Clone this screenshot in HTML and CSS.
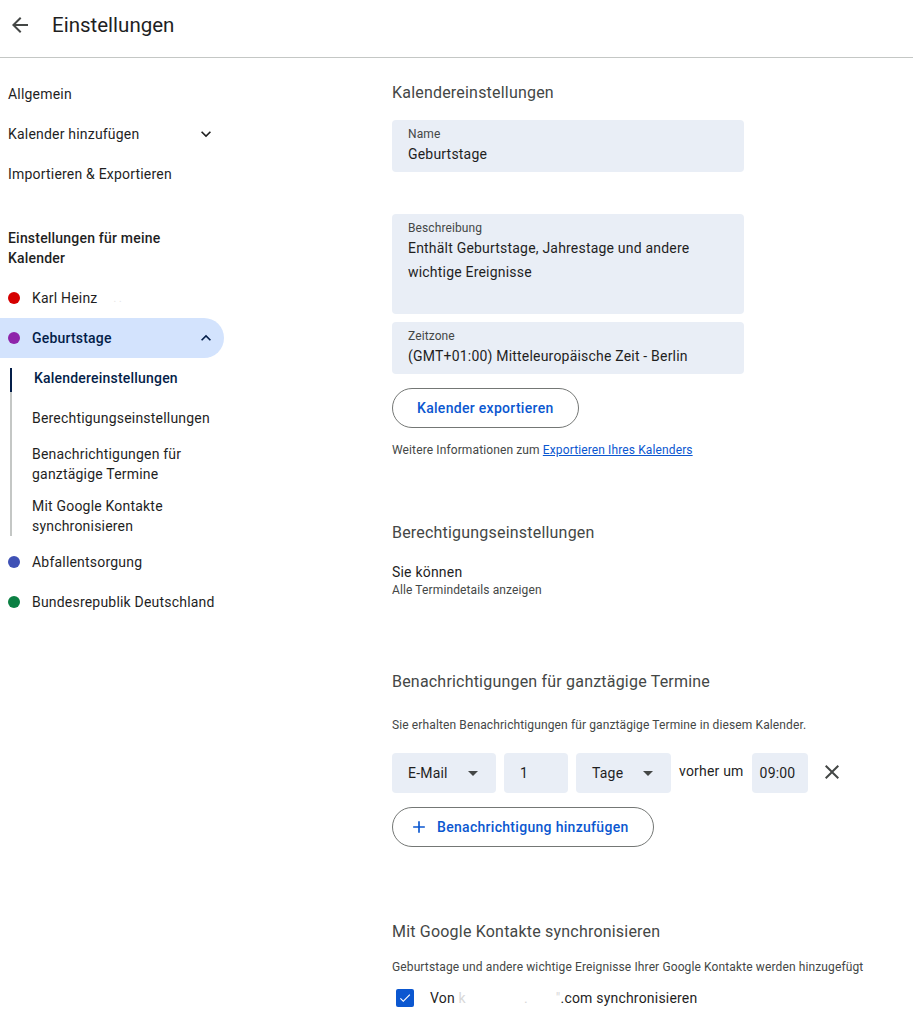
FILE: index.html
```html
<!DOCTYPE html>
<html lang="de">
<head>
  <meta charset="UTF-8" />
  <title>Einstellungen</title>
  <link rel="stylesheet" href="styles.css">
</head>
<body>
  <header class="topbar">
    <button class="back" aria-label="Zurück">
      <svg width="24" height="24" viewBox="0 0 24 24"><path d="M20 11H7.83l5.59-5.59L12 4l-8 8 8 8 1.41-1.41L7.83 13H20v-2z" fill="#444746"/></svg>
    </button>
    <h1>Einstellungen</h1>
  </header>

  <div class="layout">
    <nav class="sidebar">
      <div class="nav-item">Allgemein</div>
      <div class="nav-item">
        <span>Kalender hinzufügen</span>
        <svg class="chev" width="20" height="20" viewBox="0 0 24 24"><path d="M7.41 8.59 12 13.17l4.59-4.58L18 10l-6 6-6-6z" fill="#1f1f1f"/></svg>
      </div>
      <div class="nav-item">Importieren &amp; Exportieren</div>

      <div class="nav-heading">Einstellungen für meine Kalender</div>

      <div class="nav-item cal"><span class="dot red"></span><span>Karl Heinz</span><span class="smudge">. .</span></div>
      <div class="nav-item cal active">
        <span class="dot purple"></span><span>Geburtstage</span>
        <svg class="chev" width="20" height="20" viewBox="0 0 24 24"><path d="M7.41 15.41 12 10.83l4.59 4.58L18 14l-6-6-6 6z" fill="#041e49"/></svg>
      </div>
      <div class="sub-list">
        <div class="sub-item current">Kalendereinstellungen</div>
        <div class="sub-item">Berechtigungseinstellungen</div>
        <div class="sub-item multi">Benachrichtigungen für ganztägige Termine</div>
        <div class="sub-item multi last">Mit Google Kontakte synchronisieren</div>
      </div>
      <div class="nav-item cal"><span class="dot blue"></span><span>Abfallentsorgung</span></div>
      <div class="nav-item cal"><span class="dot green"></span><span>Bundesrepublik Deutschland</span></div>
    </nav>

    <main class="content">
      <section class="section first">
        <h2>Kalendereinstellungen</h2>
        <div class="field">
          <div class="field-label">Name</div>
          <div class="field-value">Geburtstage</div>
        </div>
        <div class="field tall">
          <div class="field-label">Beschreibung</div>
          <div class="field-value wrap">Enthält Geburtstage, Jahrestage und andere wichtige Ereignisse</div>
        </div>
        <div class="field zone">
          <div class="field-label">Zeitzone</div>
          <div class="field-value">(GMT+01:00) Mitteleuropäische Zeit - Berlin</div>
        </div>
        <button class="outline-btn">Kalender exportieren</button>
        <p class="hint">Weitere Informationen zum <a href="#">Exportieren Ihres Kalenders</a></p>
      </section>

      <section class="section">
        <h2>Berechtigungseinstellungen</h2>
        <div class="perm-title">Sie können</div>
        <div class="perm-sub">Alle Termindetails anzeigen</div>
      </section>

      <section class="section notify">
        <h2>Benachrichtigungen für ganztägige Termine</h2>
        <p class="hint desc">Sie erhalten Benachrichtigungen für ganztägige Termine in diesem Kalender.</p>
        <div class="notify-row">
          <div class="box select email">E-Mail<span class="caret"></span></div>
          <div class="box num">1</div>
          <div class="box select unit">Tage<span class="caret"></span></div>
          <span class="before">vorher um</span>
          <div class="box time">09:00</div>
          <svg class="close" width="24" height="24" viewBox="0 0 24 24"><path d="M19 6.41 17.59 5 12 10.59 6.41 5 5 6.41 10.59 12 5 17.59 6.41 19 12 13.41 17.59 19 19 17.59 13.41 12z" fill="#444746"/></svg>
        </div>
        <button class="outline-btn add">
          <svg width="20" height="20" viewBox="0 0 24 24"><path d="M19 13h-6v6h-2v-6H5v-2h6V5h2v6h6v2z" fill="#0b57d0"/></svg>
          Benachrichtigung hinzufügen
        </button>
      </section>

      <section class="section sync">
        <h2>Mit Google Kontakte synchronisieren</h2>
        <p class="hint desc">Geburtstage und andere wichtige Ereignisse Ihrer Google Kontakte werden hinzugefügt</p>
        <label class="check-row">
          <span class="checkbox">
            <svg width="14" height="14" viewBox="0 0 24 24"><path d="M9 16.17 4.83 12l-1.42 1.41L9 19 21 7l-1.41-1.41z" fill="#fff"/></svg>
          </span>
          <span>Von <span class="smudge">k<span class="gap"></span>.<span class="gap short"></span>"</span>.com synchronisieren</span>
        </label>
      </section>
    </main>
  </div>
</body>
</html>
```

FILE: styles.css
```css
* {
  margin: 0;
  padding: 0;
  box-sizing: border-box;
}

body {
  font-family: Roboto, 'Noto Sans', Arial, sans-serif;
  color: #1f1f1f;
  background: #fff;
  font-size: 14px;
  letter-spacing: 0.2px;
}

.topbar {
  display: flex;
  align-items: center;
  height: 58px;
  padding-bottom: 8px;
  border-bottom: 1px solid #c4c7c5;
}

.back {
  display: flex;
  align-items: center;
  justify-content: center;
  width: 40px;
  height: 40px;
  border: none;
  background: none;
}

.topbar h1 {
  font-size: 20.5px;
  font-weight: 400;
  letter-spacing: 0;
  margin-left: 12px;
  color: #1f1f1f;
}

.layout {
  display: flex;
}

/* Sidebar */
.sidebar {
  width: 224px;
  padding-top: 16px;
  flex-shrink: 0;
}

.nav-item {
  display: flex;
  align-items: center;
  height: 40px;
  padding-left: 8px;
  padding-right: 8px;
  font-size: 14px;
  color: #1f1f1f;
}

.nav-item .chev {
  margin-left: auto;
}

.nav-heading {
  font-size: 14px;
  font-weight: 500;
  line-height: 20px;
  padding: 34px 30px 10px 8px;
}

.cal .dot {
  width: 12px;
  height: 12px;
  border-radius: 50%;
  margin-right: 12px;
  flex-shrink: 0;
}

.dot.red { background: #d50000; }
.dot.purple { background: #8e24aa; }
.dot.blue { background: #3f51b5; }
.dot.green { background: #0b8043; }

.nav-item.active {
  background: #d3e3fd;
  border-radius: 0 20px 20px 0;
  color: #041e49;
  font-weight: 500;
}

.smudge {
  color: #e4e4e4;
  margin-left: 16px;
  font-size: 10px;
}

.check-row .smudge {
  margin-left: 0;
  font-size: 14px;
  color: #d8d8d8;
}

.smudge .gap {
  display: inline-block;
  width: 58px;
}

.smudge .gap.short {
  width: 28px;
}

.sub-list {
  margin: 10px 0 6px 10px;
  border-left: 2px solid #c4c7c5;
}

.sub-item {
  padding: 10px 0 10px 20px;
  line-height: 20px;
  font-size: 14px;
  color: #1f1f1f;
}

.sub-item.current {
  color: #041e49;
  font-weight: 500;
  margin-left: -2px;
  padding: 0 0 0 22px;
  margin-bottom: 6px;
  border-left: 2px solid #041e49;
  height: 24px;
}

.sub-item.multi {
  padding-top: 6px;
  padding-bottom: 6px;
  padding-right: 30px;
}

.sub-item.last {
  padding-bottom: 0;
}

/* Content */
.content {
  margin-left: 168px;
  width: 500px;
}

.section {
  padding-top: 63px;
}

.section.first {
  padding-top: 23px;
}

.section.notify {
  padding-top: 72px;
}

.section.sync {
  padding-top: 73px;
}

.section h2 {
  font-size: 16px;
  font-weight: 400;
  line-height: 24px;
  color: #444746;
}

.field {
  width: 352px;
  height: 52px;
  background: #e9eef6;
  border-radius: 4px;
  padding: 6px 16px 0;
  margin-top: 15px;
}

.field.tall {
  height: 100px;
  margin-top: 42px;
}

.field.zone {
  margin-top: 8px;
}

.field-label {
  font-size: 12px;
  line-height: 16px;
  letter-spacing: 0.1px;
  color: #444746;
}

.field-value {
  font-size: 14px;
  line-height: 24px;
  color: #1f1f1f;
}

.outline-btn {
  display: inline-flex;
  align-items: center;
  height: 40px;
  padding: 0 24px;
  margin-top: 14px;
  border: 1px solid #747775;
  border-radius: 20px;
  background: #fff;
  color: #0b57d0;
  font-family: inherit;
  font-size: 14px;
  font-weight: 500;
  letter-spacing: 0.3px;
}

.outline-btn.add {
  padding-left: 16px;
  gap: 8px;
}

.hint {
  font-size: 12px;
  line-height: 16px;
  letter-spacing: 0.12px;
  color: #444746;
  margin-top: 14px;
}

.hint a {
  color: #0b57d0;
}

.perm-title {
  margin-top: 17px;
  line-height: 20px;
  font-size: 14px;
}

.perm-sub {
  font-size: 12px;
  line-height: 16px;
  letter-spacing: 0.12px;
  color: #444746;
}

.section .desc {
  margin-top: 23px;
}

.section.sync .desc {
  margin-top: 15px;
}

.notify-row {
  display: flex;
  align-items: center;
  gap: 8px;
  margin-top: 20px;
}

.box {
  display: flex;
  align-items: center;
  height: 40px;
  background: #e9eef6;
  border-radius: 4px;
  padding-left: 16px;
  font-size: 14px;
}

.box.email { width: 104px; }
.box.num { width: 64px; }
.box.unit { width: 95px; }
.box.time { width: 56px; padding-left: 8px; }

.caret {
  margin-left: auto;
  margin-right: 18px;
  border-left: 5px solid transparent;
  border-right: 5px solid transparent;
  border-top: 5px solid #444746;
}

.before {
  margin-top: -4px;
  font-size: 14px;
  color: #1f1f1f;
}

.close {
  margin-left: 4px;
  margin-top: -2px;
}

.check-row {
  display: flex;
  align-items: center;
  gap: 16px;
  margin-top: 14px;
  padding-left: 4px;
  font-size: 14px;
}

.checkbox {
  display: flex;
  align-items: center;
  justify-content: center;
  width: 18px;
  height: 18px;
  background: #0b57d0;
  border-radius: 2px;
}
```
